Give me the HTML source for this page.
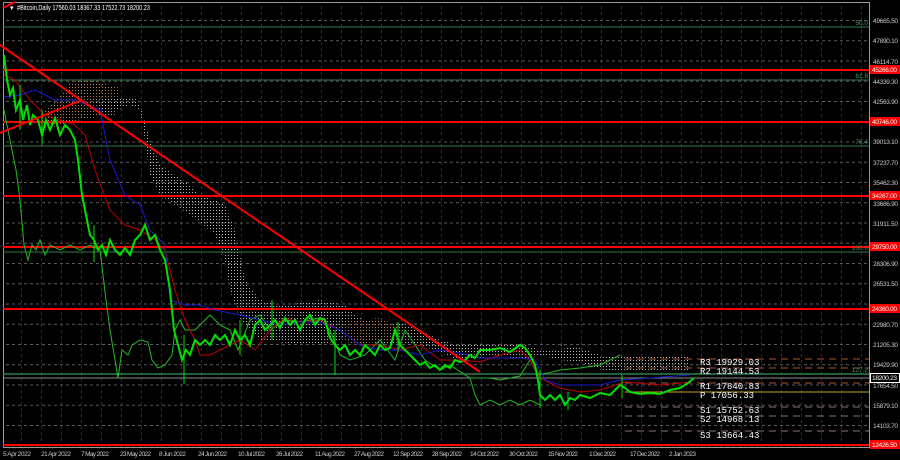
<!DOCTYPE html>
<html><head><meta charset="utf-8"><style>
html,body{margin:0;padding:0;background:#000;width:900px;height:460px;overflow:hidden}
svg{display:block}
text{font-family:"Liberation Sans",sans-serif}
</style></head><body>
<svg width="900" height="460" viewBox="0 0 900 460" xmlns="http://www.w3.org/2000/svg">
<defs>
<pattern id="vg" x="2" y="0" width="20" height="460" patternUnits="userSpaceOnUse">
<line x1="20" y1="0" x2="20" y2="460" stroke="#5a5a5a" stroke-width="1" stroke-dasharray="3,3"/></pattern>
<pattern id="hg" x="0" y="20" width="900" height="20.25" patternUnits="userSpaceOnUse">
<line x1="0" y1="0.5" x2="900" y2="0.5" stroke="#5a5a5a" stroke-width="1" stroke-dasharray="3,3"/></pattern>
<pattern id="dotO" width="3" height="3" patternUnits="userSpaceOnUse"><rect width="1" height="1" fill="#c08050"/></pattern>
<pattern id="dotW" width="3" height="3" patternUnits="userSpaceOnUse"><rect width="1" height="1" fill="#b8b8b8"/></pattern>
</defs>
<rect width="900" height="460" fill="#000"/>
<rect x="3" y="3" width="866" height="444" fill="url(#vg)"/>
<rect x="3" y="3" width="866" height="444" fill="url(#hg)"/>
<rect x="3.5" y="2.5" width="866" height="445" fill="none" stroke="#9a9a9a"/>
<!-- ichimoku cloud -->
<polygon points="40,115 55,100 62,95 70,82 90,80 100,82 120,88 120,100 115,115 90,118 60,125 45,130" fill="url(#dotO)"/>
<polygon points="95,100 110,98 125,97 135,98 140,105 150,140 160,165 175,175 190,185 200,195 215,200 225,205 235,230 240,255 245,280 260,300 280,305 300,303 320,300 345,305 360,318 380,325 400,322 420,330 440,340 460,345 480,343 500,345 520,343 540,350 560,350 580,352 600,355 600,365 580,362 560,360 540,355 520,360 500,355 480,358 460,362 440,352 420,345 400,342 380,345 360,338 340,340 320,345 300,345 280,342 260,340 240,320 230,290 225,260 215,235 200,222 190,215 175,205 160,195 150,175 145,140 140,110 130,105 110,112 100,115" fill="url(#dotW)"/>
<polygon points="345,318 360,320 380,318 395,325 410,330 400,340 380,340 360,345 345,342" fill="url(#dotO)"/>
<polygon points="560,345 580,348 600,355 620,355 690,355 690,370 620,372 590,368" fill="url(#dotW)"/>
<!-- horizontal levels -->
<line x1="3" y1="27" x2="869" y2="27" stroke="#2e7d4a" stroke-width="1"/>
<line x1="3" y1="80" x2="869" y2="80" stroke="#2e7d4a" stroke-width="1"/>
<line x1="3" y1="146" x2="869" y2="146" stroke="#2e7d4a" stroke-width="1"/>
<line x1="3" y1="252" x2="869" y2="252" stroke="#2e7d4a" stroke-width="1"/>
<line x1="3" y1="374" x2="869" y2="374" stroke="#2e7d4a" stroke-width="1.5"/>
<line x1="3" y1="378" x2="869" y2="378" stroke="#8a8a8a" stroke-width="1"/>
<line x1="3" y1="70" x2="869" y2="70" stroke="#ff0000" stroke-width="2"/>
<line x1="3" y1="122" x2="869" y2="122" stroke="#ff0000" stroke-width="2"/>
<line x1="3" y1="196" x2="869" y2="196" stroke="#ff0000" stroke-width="2"/>
<line x1="3" y1="247" x2="869" y2="247" stroke="#ff0000" stroke-width="2"/>
<line x1="3" y1="309" x2="869" y2="309" stroke="#ff0000" stroke-width="2"/>
<line x1="3" y1="445" x2="869" y2="445" stroke="#ff0000" stroke-width="2"/>
<!-- pivots -->
<g stroke-width="1" stroke-dasharray="7,5">
<line x1="625" y1="359" x2="869" y2="359" stroke="#b05030"/>
<line x1="625" y1="368" x2="869" y2="368" stroke="#b05030"/>
<line x1="625" y1="383" x2="869" y2="383" stroke="#b05030"/>
<line x1="625" y1="407" x2="869" y2="407" stroke="#907070"/>
<line x1="625" y1="416" x2="869" y2="416" stroke="#907070"/>
<line x1="625" y1="431" x2="869" y2="431" stroke="#907070"/>
</g>
<line x1="625" y1="392" x2="869" y2="392" stroke="#c8a020" stroke-width="1"/>
<!-- chikou span -->
<polyline fill="none" stroke="#22bb22" stroke-width="1" points="4,110 8,130 12,150 16,170 20,200 24,245 28,260 32,245 36,250 40,240 45,255 50,245 60,250 70,245 80,250 90,245 100,250 106,300 110,330 115,360 118,378 122,350 128,355 132,345 140,340 148,342 152,360 158,368 165,365 172,355 175,330 180,320 185,330 195,330 200,325 210,315 220,325 230,330 238,350 250,320 260,315 270,330 285,320 300,322 320,318 330,330 340,355 350,360 365,355 380,340 395,360 405,330 415,345 425,360 440,370 450,365 470,378 478,378 490,378 500,380 510,378 520,376 530,360 535,370 540,375 560,370 580,368 600,365 620,355"/>
<polyline fill="none" stroke="#22bb22" stroke-width="1" points="470,378 475,395 480,405 490,400 500,405 510,400 520,405 530,400 540,405"/>
<!-- tenkan / kijun -->
<polyline fill="none" stroke="#c00000" stroke-width="1" points="4,75 15,80 30,100 45,115 60,120 75,125 85,135 95,170 110,210 125,225 140,230 155,240 165,250 175,290 180,305 185,320 195,340 200,355 210,355 220,350 240,340 255,350 270,330 285,318 300,322 320,320 340,330 360,345 380,345 400,350 420,345 440,360 460,360 480,362 500,355 520,350 530,360 540,378 560,388 580,392 600,390 625,382 660,385 690,382"/>
<polyline fill="none" stroke="#1a1acc" stroke-width="1" points="4,97 20,95 35,90 55,100 75,100 100,110 110,160 125,195 140,205 150,230 165,245 170,300 185,305 200,305 215,310 225,312 240,315 260,320 280,325 300,322 320,322 335,328 340,330 360,345 380,350 400,350 420,355 440,350 460,353 480,358 500,358 520,358 535,360 545,380 560,385 575,385 600,385 620,380 650,378 690,375"/>
<!-- price -->
<polyline fill="none" stroke="#00e000" stroke-width="2" points="4,55 7,80 10,95 13,88 16,110 20,100 23,120 27,105 30,125 33,115 38,120 42,135 46,120 50,130 55,118 60,135 65,125 70,130 75,140 78,160 82,195 86,215 90,235 94,240 98,250 102,245 106,255 110,240 115,250 120,255 125,248 130,255 135,240 140,235 145,225 150,240 155,235 160,250 165,260 170,290 174,330 178,345 182,360 186,350 190,355 195,340 200,345 205,340 210,345 215,335 220,340 225,335 230,345 235,330 240,340 245,335 250,345 255,325 260,320 265,330 270,325 275,320 280,328 285,318 290,325 295,320 300,330 305,320 310,315 315,325 320,318 325,320 330,338 335,345 340,350 345,345 350,355 355,350 360,355 365,345 370,350 375,355 380,345 385,350 390,348 395,330 400,345 405,350 410,355 415,360 420,365 425,362 430,368 435,365 440,370 445,365 450,368 455,360 460,362 465,360 470,355 475,358 480,350 490,350 500,348 510,352 520,345 525,348 530,355 535,365 538,380 540,395 545,400 550,395 555,400 560,395 565,405 570,398 575,400 580,395 590,398 600,393 610,395 620,385 625,388 630,392 640,394 650,393 660,394 670,390 680,388 688,383 694,378"/>
<g stroke="#00e000" stroke-width="1">
<line x1="20" y1="85" x2="20" y2="130"/><line x1="42" y1="110" x2="42" y2="145"/><line x1="94" y1="225" x2="94" y2="262"/><line x1="184" y1="335" x2="184" y2="384"/><line x1="240" y1="320" x2="240" y2="355"/><line x1="272" y1="300" x2="272" y2="340"/><line x1="335" y1="330" x2="335" y2="375"/><line x1="398" y1="322" x2="398" y2="352"/><line x1="540" y1="370" x2="540" y2="408"/><line x1="568" y1="392" x2="568" y2="410"/><line x1="622" y1="375" x2="622" y2="398"/>
</g>
<!-- trend lines -->
<line x1="0" y1="45" x2="480" y2="372" stroke="#ff0000" stroke-width="2"/>
<line x1="0" y1="133" x2="82" y2="100" stroke="#ff0000" stroke-width="2"/>
<line x1="3" y1="8" x2="15" y2="2" stroke="#ff0000" stroke-width="2"/>
<!-- header -->
<text x="10" y="10" font-size="7" fill="#fff">▾</text>
<text x="17" y="10" font-size="7.5" fill="#fff" textLength="133" lengthAdjust="spacingAndGlyphs">#Bitcoin,Daily   17560.03 18367.33 17522.73 18200.23</text>
<!-- fib labels -->
<g font-size="6.5" fill="#3aa05a" text-anchor="end">
<text x="868" y="25">50.0</text><text x="868" y="78">61.8</text><text x="868" y="144">76.4</text><text x="868" y="250">100.0</text><text x="868" y="372">127.2</text>
</g>
<!-- pivot labels -->
<g font-size="9" fill="#fff" style="font-family:'Liberation Mono',monospace">
<text x="700" y="365" style="font-family:'Liberation Mono',monospace">R3  19929.03</text>
<text x="700" y="374" style="font-family:'Liberation Mono',monospace">R2  19144.53</text>
<text x="700" y="389" style="font-family:'Liberation Mono',monospace">R1  17840.83</text>
<text x="700" y="398" style="font-family:'Liberation Mono',monospace">P   17056.33</text>
<text x="700" y="413" style="font-family:'Liberation Mono',monospace">S1  15752.63</text>
<text x="700" y="422" style="font-family:'Liberation Mono',monospace">S2  14968.13</text>
<text x="700" y="438" style="font-family:'Liberation Mono',monospace">S3  13664.43</text>
</g>
<!-- price axis -->
<g font-size="6.5" fill="#c8c8c8" lengthAdjust="spacingAndGlyphs">
<text x="873" y="23" textLength="25">49665.50</text><text x="873" y="43" textLength="25">47890.10</text><text x="873" y="64" textLength="25">46114.70</text><text x="873" y="84" textLength="25">44339.30</text><text x="873" y="104" textLength="25">42563.90</text><text x="873" y="144" textLength="25">39013.10</text><text x="873" y="165" textLength="25">37237.70</text><text x="873" y="185" textLength="25">35462.30</text><text x="873" y="206" textLength="25">33686.90</text><text x="873" y="226" textLength="25">31911.50</text><text x="873" y="266" textLength="25">28306.90</text><text x="873" y="286" textLength="25">26531.50</text><text x="873" y="327" textLength="25">22980.70</text><text x="873" y="347" textLength="25">21205.30</text><text x="873" y="367" textLength="25">19429.90</text><text x="873" y="388" textLength="25">17654.50</text><text x="873" y="408" textLength="25">15879.10</text><text x="873" y="428" textLength="25">14103.70</text>
</g>
<g font-size="6.5" fill="#fff">
<rect x="870" y="65" width="30" height="9" fill="#ff0000"/><text x="872" y="72" textLength="25">45266.00</text>
<rect x="870" y="117" width="30" height="9" fill="#ff0000"/><text x="872" y="124" textLength="25">40746.00</text>
<rect x="870" y="191" width="30" height="9" fill="#ff0000"/><text x="872" y="198" textLength="25">34267.00</text>
<rect x="870" y="242" width="30" height="9" fill="#ff0000"/><text x="872" y="249" textLength="25">29750.00</text>
<rect x="870" y="304" width="30" height="9" fill="#ff0000"/><text x="872" y="311" textLength="25">24360.00</text>
<rect x="870" y="440" width="30" height="9" fill="#ff0000"/><text x="872" y="447" textLength="25">12426.50</text>
<rect x="870.5" y="373.5" width="29" height="9" fill="#000" stroke="#fff"/><text x="872" y="380" textLength="25">18200.23</text>
</g>
<!-- date axis -->
<g font-size="6.5" fill="#c8c8c8">
<text x="3" y="456" textLength="28">5 Apr 2022</text><text x="41" y="456" textLength="30">21 Apr 2022</text><text x="81" y="456" textLength="28">7 May 2022</text><text x="120" y="456" textLength="31">23 May 2022</text><text x="159" y="456" textLength="27">8 Jun 2022</text><text x="198" y="456" textLength="29">24 Jun 2022</text><text x="238" y="456" textLength="27">10 Jul 2022</text><text x="276" y="456" textLength="27">26 Jul 2022</text><text x="315" y="456" textLength="30">11 Aug 2022</text><text x="354" y="456" textLength="30">27 Aug 2022</text><text x="393" y="456" textLength="30">12 Sep 2022</text><text x="432" y="456" textLength="30">28 Sep 2022</text><text x="470" y="456" textLength="29">14 Oct 2022</text><text x="509" y="456" textLength="29">30 Oct 2022</text><text x="548" y="456" textLength="30">15 Nov 2022</text><text x="589" y="456" textLength="27">1 Dec 2022</text><text x="630" y="456" textLength="30">17 Dec 2022</text><text x="669" y="456" textLength="27">2 Jan 2023</text>
</g>
</svg>
</body></html>
